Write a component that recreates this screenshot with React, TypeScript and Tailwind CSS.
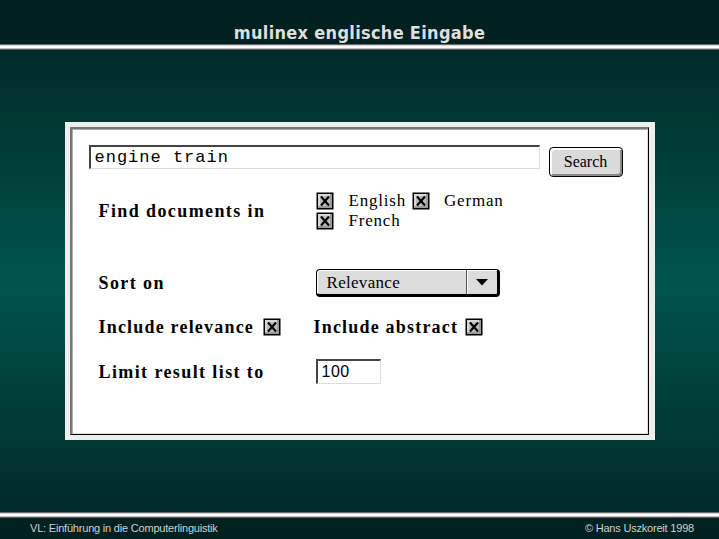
const serif = "font-['Liberation_Serif','Times_New_Roman',serif]";

function Check() {
  return (
    <svg width="18" height="18" viewBox="0 0 18 18" className="shrink-0">
      <rect x="0.5" y="0.5" width="17" height="17" fill="#000" />
      <rect x="2" y="2" width="14" height="14" fill="#9a9a9a" />
      <rect x="2" y="2" width="12" height="12" fill="#d8d8d8" />
      <rect x="4" y="4" width="10" height="10" fill="#bdbdbd" />
      <path d="M5 4.5 L13 13.5 M13 4.5 L5 13.5" stroke="#000" strokeWidth="2.2" />
    </svg>
  );
}

function Rule() {
  return (
    <div className="flex flex-col">
      <div className="h-px bg-[#6a6a6a]" />
      <div className="h-px bg-[#d8d8d8]" />
      <div className="h-[2px] bg-white" />
      <div className="h-px bg-[#bdbdbd]" />
      <div className="h-px bg-[#5a5a5a]" />
    </div>
  );
}

export default function App() {
  return (
    <div className="w-[719px] h-[539px] flex flex-col bg-[#00211f] overflow-hidden">
      <div className="h-[44px] flex items-end justify-center pb-[2px]">
        <span className="font-['DejaVu_Sans_Condensed','Liberation_Sans',sans-serif] font-bold text-[18px] leading-none text-[#dedede] tracking-[0.3px]">
          mulinex englische Eingabe
        </span>
      </div>
      <Rule />

      <main className="flex-1 flex items-center justify-center bg-[linear-gradient(to_bottom,#002a27_0%,#00544c_50%,#002a27_100%)]">
        <div className="w-[590px] h-[318px] bg-[#eeeeee] pt-[5px] pl-[5px] pr-[6px] pb-[5px]">
          <div className="h-full border-t-2 border-l-2 border-t-[#777] border-l-[#777] border-b border-r border-b-black border-r-black">
            <div className="h-full bg-white border-t border-l border-t-[#aaa] border-l-[#aaa] border-b border-r border-b-[#ddd] border-r-[#ddd] pl-[16px] pt-[15px]">
              <div className="flex items-start gap-[9px]">
                <div className="w-[451px] h-[24px] border-t-2 border-l-2 border-t-[#444] border-l-[#444] border-b border-r border-b-[#ddd] border-r-[#ddd] flex items-center pl-[4px]">
                  <span className="font-['Liberation_Mono','Courier_New',monospace] text-[17px] leading-none text-black tracking-[1px]">
                    engine train
                  </span>
                </div>
                <button className="mt-[2px] w-[74px] h-[30px] rounded-[4px] border border-black bg-[#dadada] shadow-[inset_2px_2px_0_#fff,inset_-2px_-2px_0_#8a8a8a] flex items-center justify-center">
                  <span className={`${serif} text-[16px] leading-none text-black`}>Search</span>
                </button>
              </div>

              <div className={`${serif} pl-[10px] text-black`}>
                <div className="mt-[15px] flex items-center h-[37px]">
                  <div className="w-[217px] font-bold text-[18px] tracking-[1.4px] leading-none">
                    Find documents in
                  </div>
                  <div className="flex flex-col gap-[2px] text-[17px] leading-none tracking-[0.8px]">
                    <div className="flex items-center h-[18px]">
                      <Check />
                      <span className="ml-[15px]">English</span>
                      <span className="ml-[6px]"><Check /></span>
                      <span className="ml-[14px]">German</span>
                    </div>
                    <div className="flex items-center h-[18px]">
                      <Check />
                      <span className="ml-[15px]">French</span>
                    </div>
                  </div>
                </div>

                <div className="mt-[40px] flex items-center h-[28px]">
                  <div className="w-[217px] font-bold text-[18px] tracking-[1.4px] leading-none">Sort on</div>
                  <div className="w-[184px] h-[28px] rounded-[4px] border border-black border-r-[3px] border-b-[3px] bg-[#dcdcdc] shadow-[inset_1px_1px_0_#fff] flex">
                    <div className="flex-1 flex items-center pl-[10px] text-[17px] leading-none tracking-[0.3px]">
                      Relevance
                    </div>
                    <div className="w-[31px] border-l border-l-[#555] shadow-[inset_1px_1px_0_#fff] flex items-center justify-center">
                      <svg width="12" height="8" viewBox="0 0 12 8">
                        <path d="M0 1 H12 L6 7.5 Z" fill="#000" />
                      </svg>
                    </div>
                  </div>
                </div>

                <div className="mt-[21px] flex items-center h-[18px] font-bold text-[18px] tracking-[1.2px] leading-none">
                  <div className="w-[215px] flex items-center">
                    <span>Include relevance</span>
                    <span className="ml-[9px]"><Check /></span>
                  </div>
                  <div className="flex items-center">
                    <span>Include abstract</span>
                    <span className="ml-[7px]"><Check /></span>
                  </div>
                </div>

                <div className="mt-[23px] flex items-center h-[25px]">
                  <div className="w-[217px] font-bold text-[18px] tracking-[1.4px] leading-none">
                    Limit result list to
                  </div>
                  <div className="w-[65px] h-[25px] border-t-2 border-l-2 border-t-[#444] border-l-[#444] border-b border-r border-b-[#ddd] border-r-[#ddd] flex items-center pl-[4px]">
                    <span className="font-['Liberation_Sans',Arial,sans-serif] text-[16px] leading-none tracking-[0.5px]">100</span>
                  </div>
                </div>
              </div>
            </div>
          </div>
        </div>
      </main>

      <Rule />
      <footer className="h-[21px] flex items-center justify-between pl-[30px] pr-[25px] font-['Liberation_Sans',Arial,sans-serif] text-[11px] tracking-[-0.2px] leading-none text-[#d0d0d0]">
        <span>VL: Einführung in die Computerlinguistik</span>
        <span>© Hans Uszkoreit 1998</span>
      </footer>
    </div>
  );
}
